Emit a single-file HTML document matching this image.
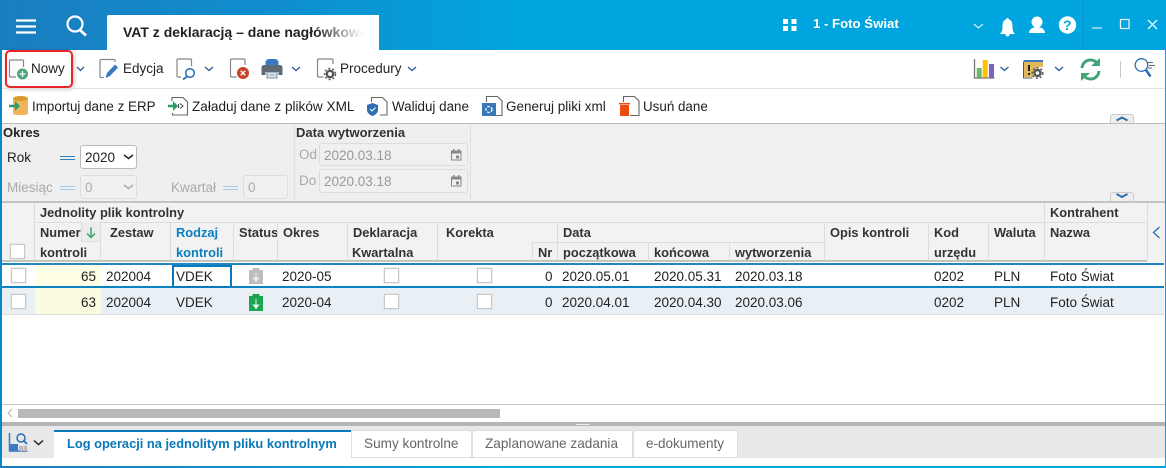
<!DOCTYPE html>
<html lang="pl"><head><meta charset="utf-8"><style>
html,body{margin:0;padding:0}
body{width:1166px;height:468px;overflow:hidden;background:#fff;position:relative;font:13.5px "Liberation Sans",sans-serif;color:#222}
.a,.t,.b,svg.i{position:absolute}
.t{white-space:nowrap;line-height:16px}
.h{font-weight:bold;color:#333;font-size:12.85px}
.g{color:#aaa}
.cb{position:absolute;width:13px;height:13px;background:#fff;border:1px solid #c8c8c8;box-shadow:0 0 0 .5px #ddd}
.v{position:absolute;width:1px;background:#ddd}
</style></head><body>
<!-- top bar -->
<div class="a" style="left:0;top:0;width:1166px;height:50px;background:linear-gradient(90deg,#1a7dbf 0,#0f8fcf 25%,#00a5e0 45%,#00a5e0 100%)"></div>
<svg class="i" style="left:0;top:0" width="100" height="50" fill="none" stroke="#fff"><path d="M16 20.500h20M16 26.500h20M16 32.500h20" stroke-width="2.200"/><circle cx="75" cy="24" r="7.500" stroke-width="2.200"/><path d="M80 30l6 5.500" stroke-width="2.800"/></svg>
<div class="a" style="left:107px;top:15px;width:272px;height:35px;background:#fff;border-radius:2px 2px 0 0"></div>
<div class="t" style="left:123px;top:24px;font-weight:bold;font-size:14px;color:#222;width:240px;overflow:hidden">VAT z deklaracją – dane nagłówkowe</div>
<div class="a" style="left:315px;top:15px;width:64px;height:35px;background:linear-gradient(90deg,rgba(255,255,255,0),#fff 75%)"></div>
<svg class="i" style="left:760px;top:0" width="406" height="50" fill="#fff"><path d="M23 19h5v5h-5zM31.500 19h5v5h-5zM23 26h5v5h-5zM31.500 26h5v5h-5z"/><path d="M214 24l4.500 4 4.500-4" fill="none" stroke="#d5eefa" stroke-width="1.200"/><path d="M240 34c2-2 2.500-4 2.500-8 0-4 1.500-6 3.500-6.500.3-2 2.700-2 3 0 2 .5 3.500 2.500 3.500 6.500 0 4 .5 6 2.500 8z"/><circle cx="247.500" cy="34.500" r="2"/><circle cx="277" cy="22" r="5.500"/><path d="M269 33c0-4 4-6 8-6s8 2 8 6z"/><circle cx="307.500" cy="25" r="8.700"/><path d="M332 28h10" stroke="#d5eefa" stroke-width="1.200"/><path d="M360.500 19.500h8.500v9h-8.500z" fill="none" stroke="#e5f5fc" stroke-width="1.300"/><path d="M388 20l9 9M397 20l-9 9" stroke="#e5f5fc" stroke-width="1.300"/><path d="M323 0v50" stroke="#0d95cc" stroke-width="1"/></svg>
<div class="t" style="left:813px;top:16px;font-weight:bold;font-size:13.200px;color:#fff">1 - Foto Świat</div>
<div class="t" style="left:1063px;top:17px;font-weight:bold;font-size:14px;color:#00a5e0">?</div>
<!-- left/right edges -->
<div class="a" style="left:0;top:50px;width:1.500px;height:418px;background:#0a86c8;z-index:5"></div>
<div class="a" style="left:1164.500px;top:50px;width:1.500px;height:418px;background:#00a5e0;z-index:5"></div>
<div class="a" style="left:0;top:466px;width:1166px;height:2px;background:linear-gradient(90deg,#1a7dbf,#00a5e0 45%);z-index:5"></div>
<!-- toolbar 1 -->
<div class="a" style="left:5px;top:50px;width:68px;height:38px;border:2px solid #e8262a;border-radius:5px;box-sizing:border-box;box-shadow:1px 1px 4px rgba(0,0,0,.25)"></div>
<div class="a" style="left:0;top:88px;width:1166px;height:1px;background:#e2e2e2"></div>
<div class="t" style="left:31px;top:61px">Nowy</div>
<div class="t" style="left:123px;top:61px">Edycja</div>
<div class="t" style="left:340px;top:61px">Procedury</div>
<svg class="i" style="left:0;top:50px" width="430" height="40" fill="none">
<path d="M23.500 17v-6a1 1 0 0 0-1-1H10.500a1 1 0 0 0-1 1v15a1 1 0 0 0 1 1H16" stroke="#888" stroke-width="1.200"/><circle cx="22.500" cy="24" r="5.500" fill="#4ea57c"/><path d="M19.500 24h6M22.500 21v6" stroke="#fff" stroke-width="1.300"/>
<path d="M77 17l3.500 3.500 3.500-3.500M205 17l4 3.500 4-3.500M292 17l4 3.500 4-3.500M408 17l4 3.500 4-3.500" stroke="#2c5a96" stroke-width="1.300"/>
<path d="M115 12v-1.500a1 1 0 0 0-1-1h-13a1 1 0 0 0-1 1v16a1 1 0 0 0 1 1h3" stroke="#888" stroke-width="1.200"/><path d="M105.500 28l1.500-5 8-8.500 3 3-8 8.500z" fill="#3a78c2"/>
<path d="M191.500 16v-6a1 1 0 0 0-1-1h-12.500a1 1 0 0 0-1 1v16a1 1 0 0 0 1 1h3" stroke="#888" stroke-width="1.200"/><circle cx="190" cy="23" r="4.300" stroke="#2a6fb5" stroke-width="1.500"/><path d="M187 26.500l-4 3" stroke="#2a6fb5" stroke-width="1.800"/>
<path d="M245 15v-5a1 1 0 0 0-1-1h-12.500a1 1 0 0 0-1 1v16a1 1 0 0 0 1 1h5" stroke="#888" stroke-width="1.200"/><circle cx="243" cy="23" r="6" fill="#c9412a"/><path d="M240.700 20.700l4.600 4.600M245.300 20.700l-4.600 4.600" stroke="#fff" stroke-width="1.400"/>
<path d="M265.500 15v-2.500c0-2 1.500-3.500 3.500-3.500h6c2 0 3.500 1.500 3.500 3.500V15z" fill="#3a78c2"/><path d="M261.500 18c0-2 1-3 3-3h15c2 0 3 1 3 3v7h-4v-3h-13v3h-4z" fill="#5e6b75"/><path d="M267 22h10v6h-10z" fill="#d8e6f2" stroke="#5e6b75" stroke-width=".8"/><path d="M269 25h6" stroke="#7fa8cc"/>
<path d="M333 14v-4a1 1 0 0 0-1-1h-13.500a1 1 0 0 0-1 1v16a1 1 0 0 0 1 1h5" stroke="#888" stroke-width="1.200"/><circle cx="330" cy="24" r="3.200" stroke="#555" stroke-width="2.400"/><circle cx="330" cy="24" r="5.500" stroke="#555" stroke-width="1.400" stroke-dasharray="2 2"/>
</svg>
<svg class="i" style="left:960px;top:50px" width="206" height="40" fill="none">
<path d="M14.500 9v19h20" stroke="#777" stroke-width="1.300"/><path d="M16.700 18h5v9.500h-5z" fill="#6cb868"/><path d="M22.700 10h5v17.500h-5z" fill="#fec107"/><path d="M29 14h5v13.500h-5z" fill="#7f5fc0"/>
<path d="M40.500 17l4 3.500 4-3.500M95 17l4 3.500 4-3.500" stroke="#2c5a96" stroke-width="1.300"/>
<path d="M63.500 11h19.500" stroke="#3a78c2" stroke-width="2"/><path d="M63.500 12h19.500v5h-6l-4 10h-9.500z" fill="#e3b75c"/><path d="M63.500 12v16h9" stroke="#555"/><path d="M69 15v6M69 23v2" stroke="#222" stroke-width="2"/><circle cx="77.500" cy="23" r="3" stroke="#555" stroke-width="2.400"/><circle cx="77.500" cy="23" r="5.300" stroke="#555" stroke-width="1.400" stroke-dasharray="2 2"/>
<path d="M122 18c.5-5 4-8 8.500-8 3 0 5 1 7 3.500M139 21c-.5 5-4 8-8.500 8-3 0-5-1-7-3.500" stroke="#3fa67a" stroke-width="3"/><path d="M131 16h9V8zM130 23h-9v8z" fill="#3fa67a"/>
<path d="M160.500 11v17" stroke="#c8c8c8" stroke-width="1"/>
<circle cx="181.500" cy="15" r="6.300" stroke="#2a6fb5" stroke-width="1.300"/><path d="M186 20l4.500 6.500" stroke="#2a6fb5" stroke-width="2.500"/><path d="M188 12.500h5M189 15.500h6M188 18h4" stroke="#666" stroke-width="1"/>
</svg>
<!-- toolbar 2 -->
<div class="t" style="left:32px;top:99px;font-size:13.400px">Importuj dane z ERP</div>
<div class="t" style="left:192px;top:99px;font-size:13.600px">Załaduj dane z plików XML</div>
<div class="t" style="left:392px;top:99px;font-size:13.400px">Waliduj dane</div>
<div class="t" style="left:506px;top:99px;font-size:13.500px">Generuj pliki xml</div>
<div class="t" style="left:643px;top:99px;font-size:13.400px">Usuń dane</div>
<svg class="i" style="left:0;top:90px" width="680" height="34" fill="none">
<path d="M13 8h15v16c-3 1.500-12 1.500-15 0z" fill="#efb45a"/><ellipse cx="20.500" cy="8.500" rx="7.500" ry="2.500" fill="#d99a2f"/><path d="M9 16h7" stroke="#2c9c6a" stroke-width="2.500"/><path d="M15 11l5 5-5 5z" fill="#2c9c6a"/>
<path d="M172 11V7.500h11l4.500 4.500v13h-15v-2" stroke="#666" stroke-width="1.100"/><path d="M168 16h6" stroke="#2c9c6a" stroke-width="2.500"/><path d="M173 11l5 5-5 5z" fill="#2c9c6a"/><path d="M180 13.500l3 2.500-3 2.500M178.500 14v4" stroke="#444"/>
<path d="M371.500 12V7.500h11l4.500 4.500v13h-7" stroke="#666" stroke-width="1.100"/><path d="M367 15l5.500-2 5.500 2v5c0 3-3 5-5.500 6-2.500-1-5.500-3-5.500-6z" fill="#2f6eb0"/><path d="M370 19l2 2 3.500-3.500" stroke="#fff"/>
<path d="M486.500 12V6.500h11l4.500 4.500v14.500h-6" stroke="#666" stroke-width="1.100"/><path d="M482 13h14v13h-14z" fill="#3a78b8"/><circle cx="489" cy="19.500" r="3" stroke="#fff" stroke-width="1.300" stroke-dasharray="2.500 1.500"/>
<path d="M623.500 12V6.500h11l4.500 4.500v14.500h-9" stroke="#666" stroke-width="1.100"/><path d="M620 15h9v11h-9z" fill="#e84e14"/><path d="M619 13.700h11" stroke="#e84e14" stroke-width="1.600"/>
</svg>
<div class="a" style="left:0;top:123px;width:1166px;height:1px;background:#bbb"></div>
<!-- filter panel -->
<div class="a" style="left:0;top:124px;width:1166px;height:78px;background:#fff"></div>
<div class="a" style="left:0;top:124px;width:470px;height:78px;background:#efefef"></div>
<div class="a" style="left:470px;top:124px;width:696px;height:78px;background:#f0f0f0"></div>
<div class="v" style="left:294px;top:124px;height:78px;background:#e0e0e0"></div>
<div class="v" style="left:470px;top:124px;height:78px;background:#e0e0e0"></div>
<div class="t" style="left:3px;top:125px;font-weight:bold;font-size:13px">Okres</div>
<div class="t" style="left:296px;top:125px;font-weight:bold;font-size:13px;color:#333">Data wytworzenia</div>
<div class="t" style="left:7px;top:150px;font-size:13.500px">Rok</div>
<div class="a" style="left:60px;top:156px;width:15px;height:1px;background:#2f82bc;box-shadow:0 3px 0 #2f82bc"></div>
<div class="a" style="left:80px;top:145px;width:57px;height:24px;border:1px solid #bbb;border-radius:3px;background:#fff;box-sizing:border-box"></div>
<div class="t" style="left:85px;top:150px;font-size:13.500px">2020</div>
<div class="t g" style="left:7px;top:180px;font-size:13.500px">Miesiąc</div>
<div class="a" style="left:60px;top:186px;width:15px;height:1px;background:#a8cce4;box-shadow:0 3px 0 #a8cce4"></div>
<div class="a" style="left:80px;top:175px;width:57px;height:24px;border:1px solid #ddd;border-radius:3px;background:#f0f0f0;box-sizing:border-box"></div>
<div class="t g" style="left:85px;top:180px;font-size:13.500px">0</div>
<div class="t g" style="left:171px;top:180px;font-size:13.500px">Kwartał</div>
<div class="a" style="left:223px;top:186px;width:15px;height:1px;background:#a8cce4;box-shadow:0 3px 0 #a8cce4"></div>
<div class="a" style="left:243px;top:175px;width:45px;height:24px;border:1px solid #ddd;border-radius:3px;background:#f0f0f0;box-sizing:border-box"></div>
<div class="t g" style="left:248px;top:180px;font-size:13.500px">0</div>
<div class="t g" style="left:299px;top:147px;font-size:13.500px">Od</div>
<div class="t g" style="left:299px;top:173px;font-size:13.500px">Do</div>
<div class="a" style="left:319px;top:143px;width:149px;height:23px;border:1px solid #ddd;border-radius:3px;background:#f0f0f0;box-sizing:border-box"></div>
<div class="a" style="left:319px;top:169px;width:149px;height:24px;border:1px solid #ddd;border-radius:3px;background:#f0f0f0;box-sizing:border-box"></div>
<div class="t g" style="left:324px;top:148px;font-size:13.500px;color:#999">2020.03.18</div>
<div class="t g" style="left:324px;top:174px;font-size:13.500px;color:#999">2020.03.18</div>
<svg class="i" style="left:0;top:124px" width="480" height="78" fill="none">
<path d="M124 31l4.500 3.500 4.500-3.500" stroke="#222" stroke-width="1.500"/><path d="M124 61l4.500 3.500 4.500-3.500" stroke="#aaa" stroke-width="1.500"/>
<path d="M451.500 28h9.500v8h-9.500z" stroke="#888"/><path d="M451 26.500h10.500v3H451zM453 25h1.500v2H453zM458 25h1.500v2H458zM456 31.500h3v3h-3z" fill="#888"/>
<path d="M451.500 54h9.500v8h-9.500z" stroke="#888"/><path d="M451 52.500h10.500v3H451zM453 51h1.500v2H453zM458 51h1.500v2H458zM456 57.500h3v3h-3z" fill="#888"/>
</svg>
<div class="a" style="left:1110px;top:114px;width:24px;height:9px;background:#eee;border:1px solid #ccc;border-bottom:0;border-radius:3px 3px 0 0;box-sizing:border-box"></div>
<div class="a" style="left:1110px;top:192px;width:24px;height:10px;background:#eee;border:1px solid #ccc;border-bottom:0;border-radius:3px 3px 0 0;box-sizing:border-box"></div>
<svg class="i" style="left:1110px;top:110px" width="24" height="95" fill="none" stroke="#2c6fa8" stroke-width="2"><path d="M6.500 10.500l5.500-3 5.500 3"/><path d="M6.500 84l5.500 3 5.500-3"/></svg>
<!-- table header -->
<div class="a" style="left:0;top:201px;width:1166px;height:2px;background:#c4c4c0"></div>
<div class="a" style="left:0;top:203px;width:1166px;height:59px;background:#f2f2f2"></div>
<div class="a" style="left:0;top:260px;width:1147px;height:2px;background:#c4c4c0"></div>
<div class="a" style="left:35px;top:222px;width:1112px;height:1px;background:#ddd"></div>
<div class="a" style="left:533px;top:242px;width:291px;height:1px;background:#ddd"></div>
<div class="v" style="left:34px;top:203px;height:57px"></div>
<div class="v" style="left:100px;top:222px;height:38px"></div>
<div class="v" style="left:170px;top:222px;height:38px"></div>
<div class="v" style="left:233px;top:222px;height:38px"></div>
<div class="v" style="left:277px;top:222px;height:38px"></div>
<div class="v" style="left:347px;top:222px;height:38px"></div>
<div class="v" style="left:437px;top:222px;height:38px"></div>
<div class="v" style="left:532px;top:242px;height:18px"></div>
<div class="v" style="left:557px;top:222px;height:38px"></div>
<div class="v" style="left:648px;top:242px;height:18px"></div>
<div class="v" style="left:729px;top:242px;height:18px"></div>
<div class="v" style="left:824px;top:222px;height:38px"></div>
<div class="v" style="left:928px;top:222px;height:38px"></div>
<div class="v" style="left:988px;top:222px;height:38px"></div>
<div class="v" style="left:1044px;top:203px;height:57px"></div>
<div class="v" style="left:1147px;top:203px;height:57px"></div>
<div class="a" style="left:81px;top:222px;width:19px;height:20px;background:#ececec;border-left:1px solid #ddd;border-bottom:1px solid #ddd;box-sizing:border-box"></div>
<svg class="i" style="left:81px;top:222px" width="20" height="20" fill="none" stroke="#4aa874" stroke-width="1.600"><path d="M10 5.500v10M6 11.500l4 4 4-4"/></svg>
<div class="t h" style="left:40px;top:205px">Jednolity plik kontrolny</div>
<div class="t h" style="left:1050px;top:205px">Kontrahent</div>
<div class="t h" style="left:40px;top:225px;width:41px;overflow:hidden">Numer</div>
<div class="t h" style="left:40px;top:245px">kontroli</div>
<div class="t h" style="left:110px;top:225px">Zestaw</div>
<div class="t h" style="left:176px;top:225px;color:#0a7fc0">Rodzaj</div>
<div class="t h" style="left:176px;top:245px;color:#0a7fc0">kontroli</div>
<div class="t h" style="left:239px;top:225px;width:38px;overflow:hidden">Status</div>
<div class="t h" style="left:283px;top:225px">Okres</div>
<div class="t h" style="left:353px;top:225px">Deklaracja</div>
<div class="t h" style="left:352px;top:245px">Kwartalna</div>
<div class="t h" style="left:446px;top:225px">Korekta</div>
<div class="t h" style="left:538px;top:245px">Nr</div>
<div class="t h" style="left:563px;top:225px">Data</div>
<div class="t h" style="left:563px;top:245px">początkowa</div>
<div class="t h" style="left:654px;top:245px">końcowa</div>
<div class="t h" style="left:735px;top:245px">wytworzenia</div>
<div class="t h" style="left:830px;top:225px">Opis kontroli</div>
<div class="t h" style="left:934px;top:225px">Kod</div>
<div class="t h" style="left:934px;top:245px">urzędu</div>
<div class="t h" style="left:994px;top:225px">Waluta</div>
<div class="t h" style="left:1050px;top:225px">Nazwa</div>
<svg class="i" style="left:1148px;top:222px" width="18" height="20" fill="none" stroke="#2a6fb5" stroke-width="1.300"><path d="M11.500 5L5.500 10.500l6 5.500"/></svg>
<div class="cb" style="left:10px;top:244px"></div>
<!-- rows -->
<div class="a" style="left:2px;top:263px;width:1162px;height:26px;background:#fff"></div>
<div class="a" style="left:2px;top:263px;width:1162px;height:2px;background:#1d87c4"></div>
<div class="a" style="left:2px;top:286px;width:1162px;height:2px;background:#0c82bf"></div>
<div class="a" style="left:2px;top:288px;width:1162px;height:26px;background:#e9f0f5"></div>
<div class="a" style="left:2px;top:314px;width:1162px;height:1px;background:#ddd"></div>
<div class="a" style="left:35px;top:265px;width:66px;height:21px;background:#ffffe6"></div>
<div class="a" style="left:35px;top:288px;width:66px;height:26px;background:#fbfbe0"></div>
<div class="a" style="left:172px;top:265px;width:60px;height:23px;border:2px solid #0878b8;box-sizing:border-box;background:#fff"></div>
<div class="cb" style="left:11px;top:268px"></div><div class="cb" style="left:11px;top:294px"></div>
<div class="cb" style="left:384px;top:268px"></div><div class="cb" style="left:384px;top:294px"></div>
<div class="cb" style="left:477px;top:268px"></div><div class="cb" style="left:477px;top:294px"></div>
<svg class="i" style="left:245px;top:265px" width="20" height="50"><path d="M4 5h3.500V3h7v2H18v14H4z" fill="#bdbdbd"/><path d="M11 8v6M8.500 13h5L11 16.500z" fill="#eee" stroke="#eee"/><path d="M4 31h3.500v-2h7v2H18v15H4z" fill="#1ba64f"/><path d="M11 34v7M8.500 40h5L11 43.500z" fill="#e8f7ee" stroke="#e8f7ee"/></svg>
<div class="t" style="left:81px;top:269px;font-size:13.500px">65</div>
<div class="t" style="left:106px;top:269px;font-size:13.500px">202004</div>
<div class="t" style="left:176px;top:269px;font-size:13.500px">VDEK</div>
<div class="t" style="left:282px;top:269px;font-size:13.500px">2020-05</div>
<div class="t" style="left:545px;top:269px;font-size:13.500px">0</div>
<div class="t" style="left:562px;top:269px;font-size:13.500px">2020.05.01</div>
<div class="t" style="left:654px;top:269px;font-size:13.500px">2020.05.31</div>
<div class="t" style="left:735px;top:269px;font-size:13.500px">2020.03.18</div>
<div class="t" style="left:934px;top:269px;font-size:13.500px">0202</div>
<div class="t" style="left:994px;top:269px;font-size:13.500px">PLN</div>
<div class="t" style="left:1050px;top:269px;font-size:13.500px">Foto Świat</div>
<div class="t" style="left:81px;top:295px;font-size:13.500px">63</div>
<div class="t" style="left:106px;top:295px;font-size:13.500px">202004</div>
<div class="t" style="left:176px;top:295px;font-size:13.500px">VDEK</div>
<div class="t" style="left:282px;top:295px;font-size:13.500px">2020-04</div>
<div class="t" style="left:545px;top:295px;font-size:13.500px">0</div>
<div class="t" style="left:562px;top:295px;font-size:13.500px">2020.04.01</div>
<div class="t" style="left:654px;top:295px;font-size:13.500px">2020.04.30</div>
<div class="t" style="left:735px;top:295px;font-size:13.500px">2020.03.06</div>
<div class="t" style="left:934px;top:295px;font-size:13.500px">0202</div>
<div class="t" style="left:994px;top:295px;font-size:13.500px">PLN</div>
<div class="t" style="left:1050px;top:295px;font-size:13.500px">Foto Świat</div>
<!-- scrollbar -->
<div class="a" style="left:0;top:404px;width:1166px;height:1px;background:#c8c8c8"></div>
<div class="a" style="left:18px;top:409px;width:482px;height:9px;background:#b8b8b8"></div>
<svg class="i" style="left:5px;top:408px" width="10" height="10" fill="none" stroke="#bbb" stroke-width="1.200"><path d="M7 1L3 5l4 4"/></svg>
<div class="a" style="left:0;top:422px;width:1166px;height:4px;background:#b5b5b5"></div>
<div class="a" style="left:576px;top:424px;width:14px;height:1px;background:#eee"></div>
<!-- tabs -->
<div class="a" style="left:0;top:426px;width:1166px;height:32px;background:#e8e8e8"></div>
<div class="a" style="left:0;top:458px;width:1166px;height:8px;background:#fff"></div>
<div class="a" style="left:54px;top:430px;width:297px;height:28px;background:#fff;border-top:2px solid #0878b8;box-sizing:border-box"></div>
<div class="a" style="left:351px;top:430px;width:121px;height:28px;background:#fff;border:1px solid #ddd;box-sizing:border-box;border-radius:3px 3px 0 0"></div>
<div class="a" style="left:472px;top:430px;width:161px;height:28px;background:#fff;border:1px solid #ddd;box-sizing:border-box;border-radius:3px 3px 0 0"></div>
<div class="a" style="left:633px;top:430px;width:105px;height:28px;background:#fff;border:1px solid #ddd;box-sizing:border-box;border-radius:3px 3px 0 0"></div>
<div class="t" style="left:67px;top:436px;font-weight:bold;font-size:12.850px;color:#0878b8">Log operacji na jednolitym pliku kontrolnym</div>
<div class="t" style="left:364px;top:436px;color:#666;font-size:13.600px">Sumy kontrolne</div>
<div class="t" style="left:485px;top:436px;color:#666;font-size:13.600px">Zaplanowane zadania</div>
<div class="t" style="left:646px;top:436px;color:#666;font-size:13.500px">e-dokumenty</div>
<svg class="i" style="left:0;top:426px" width="54" height="33" fill="none"><path d="M9.500 7v18h18" stroke="#3a78c2" stroke-width="1.500"/><path d="M10 18h8v7h-8z" fill="#3a78c2"/><path d="M19 20h4v5h-4zM23.500 20h3.500v5h-3.500z" fill="#bbb"/><circle cx="21" cy="12" r="4" stroke="#2a6fb5" stroke-width="1.500"/><path d="M24 15l3 3" stroke="#2a6fb5" stroke-width="1.800"/><path d="M34 14.500l4.500 4 4.500-4" stroke="#222" stroke-width="1.500"/></svg>
</body></html>
